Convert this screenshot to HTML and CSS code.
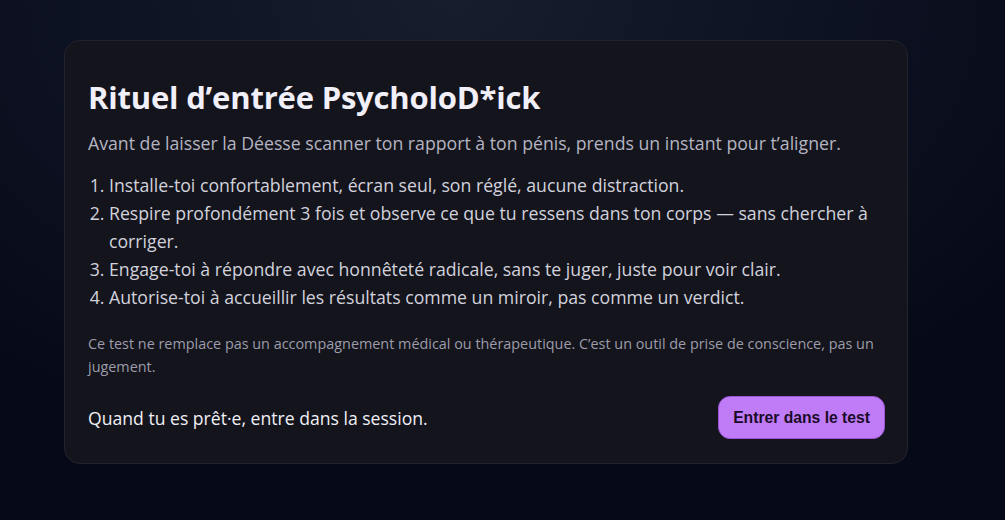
FILE: index.html
```html
<!DOCTYPE html>
<html lang="fr">
<head>
<meta charset="utf-8">
<title>Rituel d’entrée PsycholoD*ick</title>
<link rel="stylesheet" href="styles.css">
</head>
<body>
<main class="page">
  <section class="card">
    <h1 class="title">Rituel d’entrée PsycholoD*ick</h1>
    <p class="intro">Avant de laisser la Déesse scanner ton rapport à ton pénis, prends un instant pour t’aligner.</p>
    <ol class="steps">
      <li>Installe-toi confortablement, écran seul, son réglé, aucune distraction.</li>
      <li>Respire profondément 3 fois et observe ce que tu ressens dans ton corps — sans chercher à corriger.</li>
      <li>Engage-toi à répondre avec honnêteté radicale, sans te juger, juste pour voir clair.</li>
      <li>Autorise-toi à accueillir les résultats comme un miroir, pas comme un verdict.</li>
    </ol>
    <p class="note">Ce test ne remplace pas un accompagnement médical ou thérapeutique. C’est un outil de prise de conscience, pas un jugement.</p>
    <div class="footer">
      <p class="ready">Quand tu es prêt·e, entre dans la session.</p>
      <button class="btn" type="button">Entrer dans le test</button>
    </div>
  </section>
</main>
</body>
</html>
```
FILE: styles.css
```css
* { box-sizing: border-box; }
html, body { margin: 0; height: 100%; }
body {
  background: radial-gradient(ellipse 70% 90% at 45% 0%, #161d2d 0%, #0d1222 55%, #060a18 100%);
  font-family: "Open Sans", "Noto Sans", sans-serif;
  color: #d4d4de;
}
.page {
  padding: 40px 97px 0 64px;
}
.card {
  background: #14141c;
  border: 1px solid #23232d;
  border-radius: 16px;
  padding: 36px 22px 23px 23px;
  height: 424px;
}
.title {
  margin: 0;
  font-size: 31px;
  font-weight: 700;
  line-height: 40px;
  color: #f1eff8;
  letter-spacing: -0.2px;
}
.intro {
  margin: 12px 0 0;
  font-size: 17.7px;
  line-height: 28px;
  color: #b4b4c2;
}
.steps {
  margin: 14px 0 0;
  padding-left: 21px;
  font-size: 17.7px;
  line-height: 28px;
  color: #d2d2dc;
}
.note {
  margin: 21px 0 0;
  font-size: 14.4px;
  line-height: 23px;
  color: #9c9caa;
}
.footer {
  margin-top: 18px;
  display: flex;
  align-items: center;
  justify-content: space-between;
}
.ready {
  margin: 0;
  font-size: 17.6px;
  color: #f0f0f6;
}
.btn {
  font-family: "Liberation Sans", Arial, sans-serif;
  font-weight: 700;
  font-size: 15.7px;
  color: #1a0b2a;
  background: #c07bf6;
  border: 1px solid #9b55d6;
  border-radius: 12px;
  height: 43px;
  padding: 0 14px;
}
```
